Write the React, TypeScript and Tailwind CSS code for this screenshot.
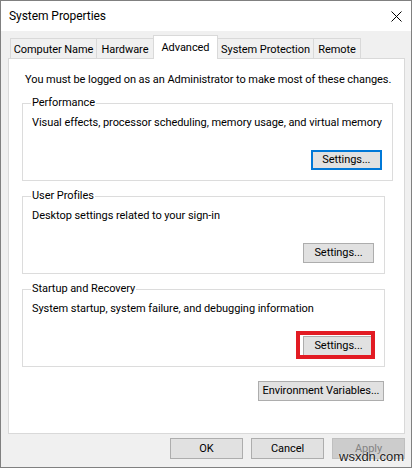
import type { ReactNode } from "react";

type BtnProps = {
    children: ReactNode;
    kind?: "normal" | "focused" | "disabled";
    className?: string;
};

function Btn({ children, kind = "normal", className = "" }: BtnProps) {
    if (kind === "focused") {
        return (
            <div className={`flex items-center justify-center bg-[#e1e1e1] border-2 border-[#0078d7] ${className}`}>
                {children}
            </div>
        );
    }
    if (kind === "disabled") {
        return (
            <div className={`flex items-center justify-center bg-[#cccccc] border border-[#bfbfbf] text-[#838383] ${className}`}>
                {children}
            </div>
        );
    }
    return (
        <div className={`flex items-center justify-center bg-[#e1e1e1] border border-[#adadad] ${className}`}>
            {children}
        </div>
    );
}

function Group({ title, text, children }: { title: string; text: string; children: ReactNode }) {
    return (
        <fieldset className="ml-[13px] w-[363px] mt-[7px] border border-[#dcdcdc] pl-[8px] pr-[10px] pb-[10px]">
            <legend className="px-[1px] leading-[16px]">{title}</legend>
            <p className="mt-[4px] pl-px leading-[16px] whitespace-nowrap">{text}</p>
            <div className="flex justify-end mt-[19px]">{children}</div>
        </fieldset>
    );
}

export default function App() {
    return (
        <div className="w-[412px] h-[468px] bg-[#f0f0f0] border border-[#808080] flex flex-col text-[11px] leading-[16px] tracking-[-0.06px] text-black font-['Roboto',sans-serif] relative overflow-hidden">

            {/* title bar */}
            <div className="h-[30px] bg-white flex items-center justify-between pl-[8px] pr-[9px] shrink-0">
                <span className="text-[12px]">System Properties</span>
                <svg width="11" height="11" viewBox="0 0 11 11">
                    <path d="M0.5 0.5 L10.5 10.5 M10.5 0.5 L0.5 10.5" stroke="#000" strokeWidth="1" />
                </svg>
            </div>

            {/* tabs */}
            <div className="mt-[4px] h-[24px] -mb-px flex items-end pl-[9px] relative z-10 shrink-0">
                <div className="w-[87px] h-[20px] mb-px border border-b-0 border-[#d9d9d9] flex justify-center pt-[3px]">Computer Name</div>
                <div className="-ml-px w-[58px] h-[20px] mb-px border border-b-0 border-[#d9d9d9] flex justify-center pt-[3px]">Hardware</div>
                <div className="-ml-px w-[65px] h-[24px] border border-b-0 border-[#d9d9d9] bg-white flex justify-center pt-[4px] relative z-10">Advanced</div>
                <div className="-ml-px w-[97px] h-[20px] mb-px border border-b-0 border-[#d9d9d9] flex justify-center pt-[3px]">System Protection</div>
                <div className="-ml-px w-[48px] h-[20px] mb-px border border-b-0 border-[#d9d9d9] flex justify-center pt-[3px]">Remote</div>
            </div>

            {/* tab panel */}
            <div className="ml-[7px] mr-[6px] h-[376px] border border-[#d9d9d9] bg-white flex flex-col shrink-0">
                <p className="pt-[13px] pl-[16px] whitespace-nowrap">You must be logged on as an Administrator to make most of these changes.</p>

                <Group title="Performance" text="Visual effects, processor scheduling, memory usage, and virtual memory">
                    <Btn kind="focused" className="w-[71px] h-[20px]">Settings...</Btn>
                </Group>

                <Group title="User Profiles" text="Desktop settings related to your sign-in">
                    <Btn className="w-[71px] h-[20px]">Settings...</Btn>
                </Group>

                <Group title="Startup and Recovery" text="System startup, system failure, and debugging information">
                    <div className="relative">
                        <Btn className="w-[71px] h-[20px]">Settings...</Btn>
                        <span className="absolute -left-[7px] -right-[1px] -top-[5px] -bottom-[3px] border-4 border-[#e21b23]"></span>
                    </div>
                </Group>

                <div className="flex justify-end mt-[14px] pr-[20px]">
                    <Btn className="w-[126px] h-[20px]">Environment Variables...</Btn>
                </div>
            </div>

            {/* dialog buttons */}
            <div className="mt-[4px] flex justify-end gap-[8px] pr-[6px]">
                <Btn className="w-[73px] h-[21px]">OK</Btn>
                <Btn className="w-[73px] h-[21px]">Cancel</Btn>
                <Btn kind="disabled" className="w-[73px] h-[21px]">Apply</Btn>
            </div>

            {/* watermark */}
            <span className="absolute left-[338px] top-[448px] text-[13px] leading-[16px] tracking-normal text-[#1c1c1c] font-['Liberation_Sans',sans-serif] [text-shadow:0_0_2px_#fff]">
                wsxdn.com
            </span>
        </div>
    );
}
